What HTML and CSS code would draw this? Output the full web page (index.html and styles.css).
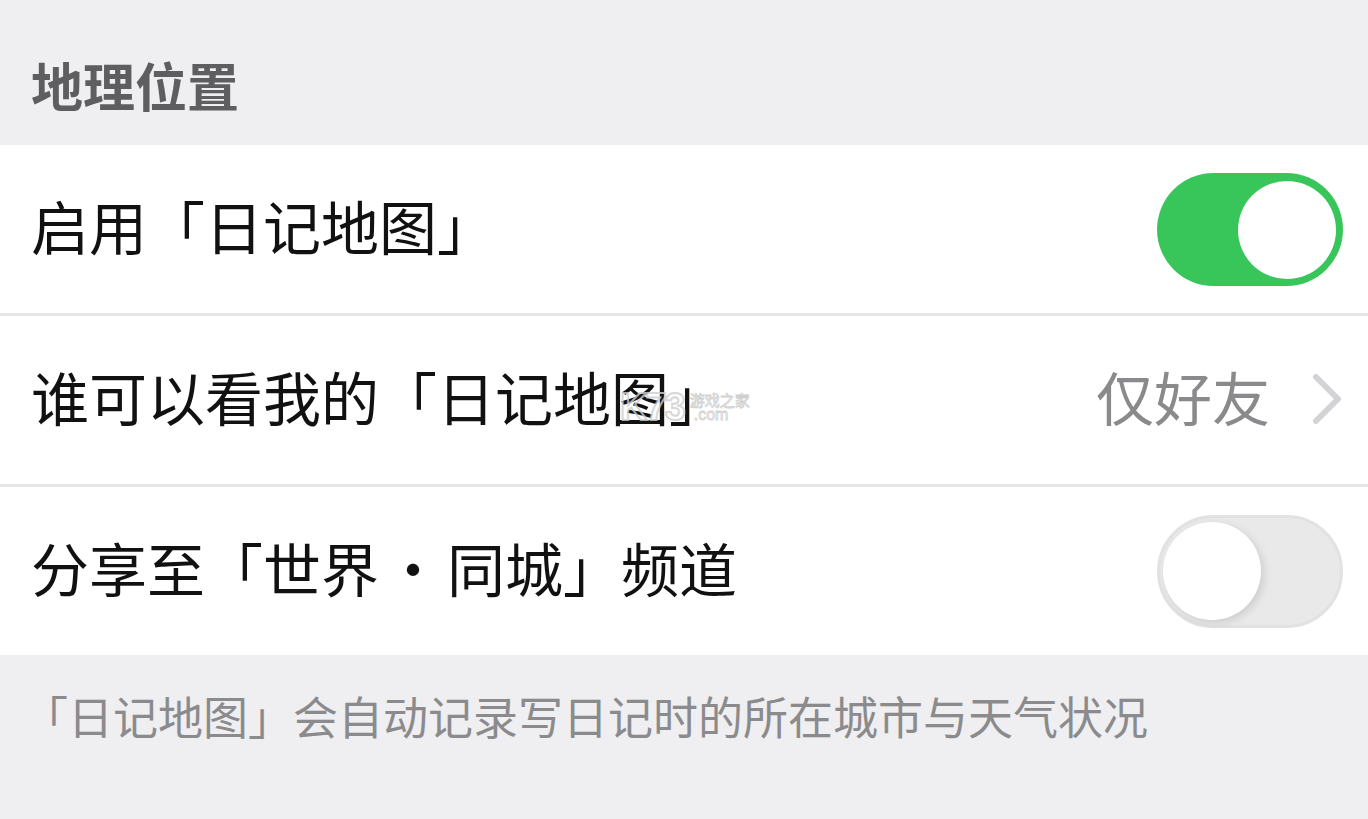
FILE: index.html
```html
<!DOCTYPE html>
<html lang="zh-CN">
<head>
<meta charset="utf-8">
<title>地理位置</title>
<link rel="stylesheet" href="styles.css">
</head>
<body>
<div class="page">
  <div class="section-title">地理位置</div>
  <div class="group">
    <div class="row">
      <span class="label">启用「日记地图」</span>
      <span class="switch on"><span class="knob"></span></span>
    </div>
    <div class="sep"></div>
    <div class="row row-link">
      <span class="label">谁可以看我的「日记地图」</span>
      <span class="value">仅好友</span>
      <svg class="chevron" width="30" height="52" viewBox="0 0 30 52"><path d="M4 4 L26 26 L4 48" fill="none" stroke="#d3d3d6" stroke-width="6" stroke-linecap="round" stroke-linejoin="round"/></svg>
      <span class="watermark"><span class="wm-logo">K73</span><span class="wm-side"><span class="wm-cn">游戏之家</span><span class="wm-com">.com</span></span></span>
    </div>
    <div class="sep"></div>
    <div class="row">
      <span class="label">分享至「世界<span class="dot">·</span>同城」频道</span>
      <span class="switch off"><span class="knob"></span></span>
    </div>
  </div>
  <div class="footnote">「日记地图」会自动记录写日记时的所在城市与天气状况</div>
</div>
</body>
</html>
```

FILE: styles.css
```css
html, body {
  margin: 0;
  padding: 0;
  background: #efeff1;
}
.page {
  width: 1368px;
  height: 819px;
  overflow: hidden;
  font-family: "Noto Sans CJK SC", "Noto Sans", sans-serif;
}
.section-title {
  height: 145px;
  box-sizing: border-box;
  padding: 59px 0 0 31px;
  font-size: 52px;
  line-height: 52px;
  font-weight: 700;
  color: #5e5e60;
}
.group {
  background: #ffffff;
}
.row {
  position: relative;
  height: 168px;
  box-sizing: border-box;
  display: flex;
  align-items: center;
  padding: 0 25px 8px 31px;
}
.label {
  flex: 1;
  font-size: 58px;
  line-height: 58px;
  color: #111111;
}
.dot {
  margin: 0 5px;
}
.value {
  font-size: 58px;
  line-height: 58px;
  color: #8a8a8c;
  margin-right: 42px;
}
.chevron {
  display: block;
  margin-right: 1px;
  margin-top: 6px;
}
.sep {
  height: 3px;
  background: #e6e6e8;
}
.switch {
  position: relative;
  width: 186px;
  height: 113px;
  border-radius: 57px;
  box-sizing: border-box;
  flex: none;
  margin-top: 8px;
}
.switch.on {
  background: #38c65b;
}
.switch.off {
  background: #e9e9ea;
  border: 3px solid #e2e2e4;
}
.knob {
  position: absolute;
  width: 98px;
  height: 98px;
  border-radius: 50%;
  background: #ffffff;
  top: 8px;
}
.switch.on .knob {
  right: 7px;
}
.switch.off .knob {
  top: 4px;
  left: 3px;
  box-shadow: 3px 3px 8px rgba(0,0,0,0.12);
}
.footnote {
  padding: 38px 0 0 23px;
  font-size: 45px;
  line-height: 45px;
  color: #8b8b8d;
}
.watermark {
  position: absolute;
  left: 620px;
  top: 72px;
  display: flex;
  align-items: center;
  gap: 6px;
  opacity: 0.8;
}
.wm-logo {
  font-family: "Liberation Sans", sans-serif;
  font-weight: 700;
  font-size: 38px;
  line-height: 38px;
  color: transparent;
  -webkit-text-stroke: 2px #cfcfcf;
  letter-spacing: -2px;
}
.wm-side {
  display: flex;
  flex-direction: column;
  line-height: 1;
}
.wm-cn {
  font-size: 15px;
  color: transparent;
  -webkit-text-stroke: 0.8px #c4c4c4;
}
.wm-com {
  font-family: "Liberation Sans", sans-serif;
  font-size: 16px;
  color: transparent;
  -webkit-text-stroke: 0.8px #c4c4c4;
  padding-left: 4px;
}
```
